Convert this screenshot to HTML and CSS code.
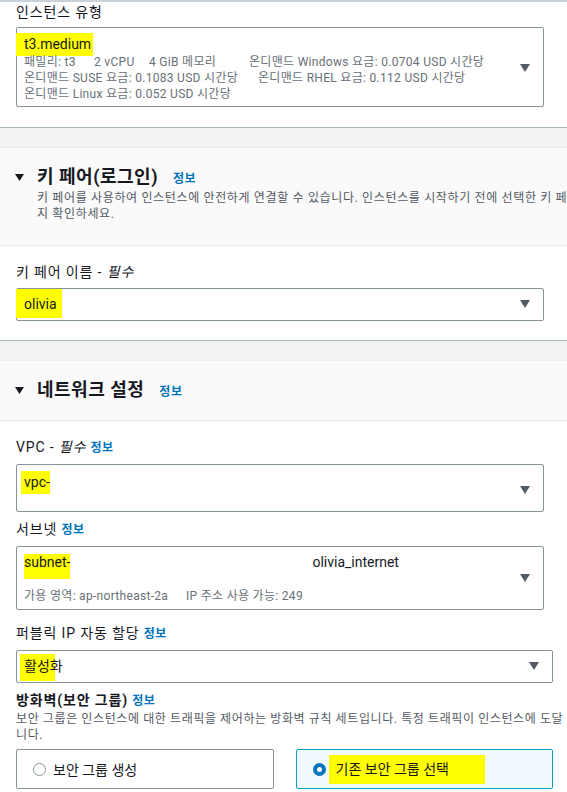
FILE: index.html
```html
<!DOCTYPE html>
<html lang="ko">
<head>
    <meta charset="UTF-8">
    <meta name="viewport" content="width=device-width, initial-scale=1.0">
    <title>인스턴스 시작</title>
    <link rel="stylesheet" href="styles.css">
</head>
<body>
    <!-- Instance type -->
    <div class="block first">
        <div class="field-label">인스턴스 유형</div>
        <div class="select narrow type-select">
            <div class="select-body">
                <div class="value"><span class="mark mark-type">t3.medium</span></div>
                <div class="meta">
                    <span class="col c1">패밀리: t3</span><span class="col c2">2 vCPU</span><span class="col c3">4 GiB 메모리</span><span>온디맨드 Windows 요금: 0.0704 USD 시간당</span>
                </div>
                <div class="meta">
                    <span class="col c4">온디맨드 SUSE 요금: 0.1083 USD 시간당</span><span>온디맨드 RHEL 요금: 0.112 USD 시간당</span>
                </div>
                <div class="meta">온디맨드 Linux 요금: 0.052 USD 시간당</div>
            </div>
            <svg class="caret" width="10" height="8" viewBox="0 0 10 8"><path d="M0 0h10L5 8z"/></svg>
        </div>
    </div>
    <div class="band"></div>

    <!-- Key pair -->
    <div class="section-head">
        <div class="head-row">
            <svg class="toggle" width="9" height="7" viewBox="0 0 9 7"><path d="M0 0h9L4.5 7z"/></svg>
            <h2>키 페어(로그인)</h2>
            <a class="info">정보</a>
        </div>
        <div class="desc">
            <div>키 페어를 사용하여 인스턴스에 안전하게 연결할 수 있습니다. 인스턴스를 시작하기 전에 선택한 키 페어에</div>
            <div>지 확인하세요.</div>
        </div>
    </div>
    <div class="block">
        <div class="field-label">키 페어 이름 - <i>필수</i></div>
        <div class="select narrow short">
            <div class="select-body">
                <div class="value"><span class="mark mark-key">olivia</span></div>
            </div>
            <svg class="caret" width="10" height="8" viewBox="0 0 10 8"><path d="M0 0h10L5 8z"/></svg>
        </div>
    </div>
    <div class="band"></div>

    <!-- Network -->
    <div class="section-head">
        <div class="head-row">
            <svg class="toggle" width="9" height="7" viewBox="0 0 9 7"><path d="M0 0h9L4.5 7z"/></svg>
            <h2>네트워크 설정</h2>
            <a class="info">정보</a>
        </div>
    </div>
    <div class="block last">
        <div class="field-label">VPC - <i>필수</i> <a class="info">정보</a></div>
        <div class="select narrow vpc-select">
            <div class="select-body">
                <div class="value"><span class="mark mark-vpc">vpc-</span></div>
                <div class="meta"></div>
            </div>
            <svg class="caret" width="10" height="8" viewBox="0 0 10 8"><path d="M0 0h10L5 8z"/></svg>
        </div>

        <div class="field-label spaced">서브넷 <a class="info">정보</a></div>
        <div class="select narrow subnet-select">
            <div class="select-body">
                <div class="value"><span class="mark mark-subnet">subnet-</span><span class="subnet-name">olivia_internet</span></div>
                <div class="meta"></div>
                <div class="meta"><span class="col c5">가용 영역: ap-northeast-2a</span><span>IP 주소 사용 가능: 249</span></div>
            </div>
            <svg class="caret" width="10" height="8" viewBox="0 0 10 8"><path d="M0 0h10L5 8z"/></svg>
        </div>

        <div class="field-label spaced-lg">퍼블릭 IP 자동 할당 <a class="info">정보</a></div>
        <div class="select short">
            <div class="select-body">
                <div class="value"><span class="mark mark-ip">활성화</span></div>
            </div>
            <svg class="caret" width="10" height="8" viewBox="0 0 10 8"><path d="M0 0h10L5 8z"/></svg>
        </div>

        <div class="field-label strong">방화벽(보안 그룹) <a class="info">정보</a></div>
        <div class="hint">
            <div>보안 그룹은 인스턴스에 대한 트래픽을 제어하는 방화벽 규칙 세트입니다. 특정 트래픽이 인스턴스에 도달</div>
            <div>니다.</div>
        </div>
        <div class="tiles">
            <div class="tile">
                <span class="radio"></span>
                <span>보안 그룹 생성</span>
            </div>
            <div class="tile selected">
                <span class="radio"></span>
                <span class="mark mark-sg">기존 보안 그룹 선택</span>
            </div>
        </div>
    </div>
</body>
</html>
```

FILE: styles.css
```css
body {
    margin: 0;
    font-family: Roboto, "Noto Sans CJK KR", sans-serif;
    font-size: 14px;
    color: #16191f;
    background-color: #fff;
    border-top: 2px solid #c9d1db;
    overflow: hidden;
}
.block {
    padding: 16px 14px 19px 16px;
    border-bottom: 1px solid #aab7b8;
}
.block.first {
    padding-top: 0;
    padding-bottom: 20px;
}
.block.last {
    border-bottom: none;
}
.band {
    height: 19px;
    background-color: #f2f3f3;
    border-bottom: 1px solid #eaeded;
}
.section-head {
    background-color: #fafafa;
    border-bottom: 1px solid #eaeded;
    padding: 17px 14px 18px 15px;
}
.head-row {
    display: flex;
    align-items: center;
    height: 24px;
}
.toggle {
    fill: #16191f;
    margin-right: 13px;
}
h2 {
    margin: 0;
    font-size: 18px;
    font-weight: 700;
    line-height: 24px;
    letter-spacing: 0.5px;
}
.head-row .info {
    margin-left: 15px;
    font-size: 12px;
}
.info {
    color: #0073bb;
    font-weight: 700;
    font-size: 12px;
    letter-spacing: 0.5px;
}
.desc {
    margin: 1px 0 5px 22px;
    font-size: 12px;
    line-height: 16px;
    color: #545b64;
    white-space: nowrap;
    letter-spacing: 0.65px;
}
.field-label {
    line-height: 20px;
    white-space: nowrap;
    letter-spacing: 0.85px;
}
.field-label.spaced {
    margin-top: 7px;
}
.field-label.spaced-lg {
    margin-top: 13px;
}
.field-label.strong {
    margin-top: 7px;
    font-weight: 700;
}
.field-label i {
    font-style: italic;
}
.select {
    display: flex;
    align-items: center;
    margin-top: 6px;
    border: 1px solid #879596;
    border-radius: 2px;
    padding: 5px 13px 6px 7px;
}
.select.narrow {
    margin-right: 9px;
}
.type-select {
    margin-top: 5px;
    padding: 6px 13px 4px 7px;
}
.vpc-select {
    padding: 7px 13px 3px 7px;
}
.subnet-select {
    padding: 5px 13px 5px 7px;
}
.select-body {
    flex: 1;
    white-space: nowrap;
}
.value {
    line-height: 20px;
}
.meta {
    height: 16px;
    line-height: 16px;
    font-size: 12px;
    color: #687078;
    letter-spacing: 0.3px;
}
.col {
    display: inline-block;
}
.c1 {
    width: 70px;
}
.c2 {
    width: 55px;
}
.c3 {
    width: 100px;
}
.c4 {
    width: 234px;
}
.c5 {
    width: 162px;
}
.caret {
    fill: #545b64;
    flex-shrink: 0;
}
.subnet-name {
    margin-left: 242px;
}
.mark {
    background-color: #ffff00;
}
.mark-type {
    padding: 3px 2px 4px 8px;
    margin-left: -8px;
}
.mark-key {
    padding: 7px 5px 6px 8px;
    margin-left: -8px;
}
.mark-vpc {
    padding: 3px 0 4px 3px;
    margin-left: -3px;
}
.mark-subnet {
    padding: 0 0 9px 0;
}
.mark-ip {
    padding: 4px 0 7px 4px;
    margin-left: -4px;
    background: linear-gradient(to right, #ffff00 0 35px, transparent 35px);
}
.mark-sg {
    padding: 3px 36px 6px 7px;
    margin-left: -7px;
}
.hint {
    font-size: 12px;
    line-height: 16px;
    color: #545b64;
    white-space: nowrap;
    letter-spacing: 0.6px;
}
.tiles {
    display: grid;
    grid-template-columns: 1fr 1fr;
    gap: 22px;
    margin-top: 6px;
}
.tile {
    display: flex;
    align-items: center;
    gap: 7px;
    height: 40px;
    box-sizing: border-box;
    padding-left: 16px;
    border: 1px solid #879596;
    border-radius: 2px;
    white-space: nowrap;
}
.tile.selected {
    gap: 10px;
    border-color: #00a1c9;
    background-color: #f1faff;
}
.radio {
    width: 13px;
    height: 13px;
    box-sizing: border-box;
    border: 1.5px solid #879596;
    border-radius: 50%;
    background-color: #fff;
    flex-shrink: 0;
}
.selected .radio {
    border: 4px solid #0073bb;
}
```
